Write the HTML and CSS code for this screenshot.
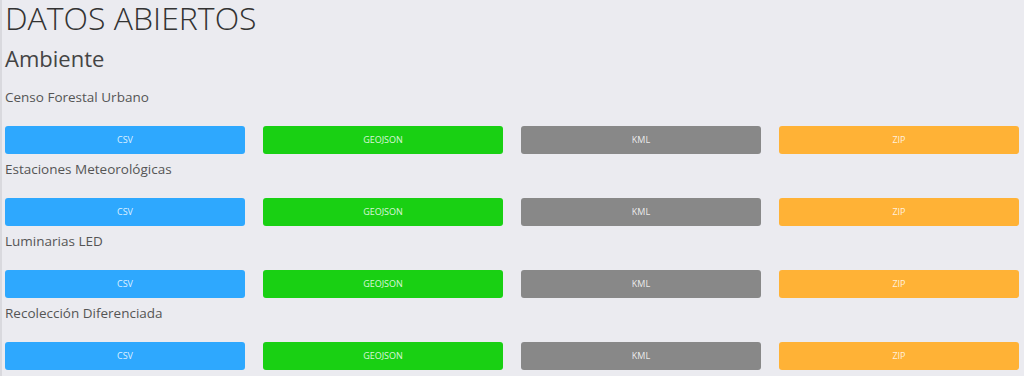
FILE: index.html
```html
<!DOCTYPE html>
<html lang="es">
<head>
    <meta charset="UTF-8">
    <meta name="viewport" content="width=device-width, initial-scale=1.0">
    <title>Datos Abiertos</title>
    <link rel="stylesheet" href="styles.css">
</head>
<body>

<div class="page">
    <h1 class="title">DATOS ABIERTOS</h1>

    <!-- categoria -->
    <h2 class="category">Ambiente</h2>

    <div class="dataset">
        <p class="dataset-name">Censo Forestal Urbano</p>
        <div class="downloads">
            <a class="btn btn-csv" href="#">CSV</a>
            <a class="btn btn-geojson" href="#">GEOJSON</a>
            <a class="btn btn-kml" href="#">KML</a>
            <a class="btn btn-zip" href="#">ZIP</a>
        </div>
    </div>

    <div class="dataset">
        <p class="dataset-name">Estaciones Meteorológicas</p>
        <div class="downloads">
            <a class="btn btn-csv" href="#">CSV</a>
            <a class="btn btn-geojson" href="#">GEOJSON</a>
            <a class="btn btn-kml" href="#">KML</a>
            <a class="btn btn-zip" href="#">ZIP</a>
        </div>
    </div>

    <div class="dataset">
        <p class="dataset-name">Luminarias LED</p>
        <div class="downloads">
            <a class="btn btn-csv" href="#">CSV</a>
            <a class="btn btn-geojson" href="#">GEOJSON</a>
            <a class="btn btn-kml" href="#">KML</a>
            <a class="btn btn-zip" href="#">ZIP</a>
        </div>
    </div>

    <div class="dataset">
        <p class="dataset-name">Recolección Diferenciada</p>
        <div class="downloads">
            <a class="btn btn-csv" href="#">CSV</a>
            <a class="btn btn-geojson" href="#">GEOJSON</a>
            <a class="btn btn-kml" href="#">KML</a>
            <a class="btn btn-zip" href="#">ZIP</a>
        </div>
    </div>
</div>

</body>
</html>
```

FILE: styles.css
```css
body {
    font-family: 'Open Sans', 'Liberation Sans', sans-serif;
    margin: 0;
    padding: 0;
    background-color: #ebebf0;
    color: #444;
}
.page {
    border-left: 2px solid #d9d9de;
    padding: 0 5px 0 3px;
    min-height: 100vh;
}
.title {
    margin: 0;
    font-size: 32px;
    font-weight: 300;
    line-height: 36px;
    color: #333;
}
.category {
    margin: 8px 0 0 0;
    font-size: 22px;
    font-weight: 400;
    line-height: 28px;
    color: #444;
}
.dataset-name {
    margin: 5px 0 0 0;
    font-size: 13.5px;
    line-height: 20px;
    color: #555;
}
.category + .dataset .dataset-name {
    margin-top: 15px;
}
.downloads {
    display: flex;
    gap: 18px;
    margin-top: 19px;
}
.btn {
    flex: 1;
    height: 28px;
    line-height: 28px;
    text-align: center;
    font-size: 9px;
    color: rgba(255, 255, 255, 0.85);
    text-decoration: none;
    border-radius: 3px;
}
.btn-csv {
    background-color: #2ea8fe;
}
.btn-geojson {
    background-color: #19d013;
}
.btn-kml {
    background-color: #888888;
}
.btn-zip {
    background-color: #ffb236;
}
```
